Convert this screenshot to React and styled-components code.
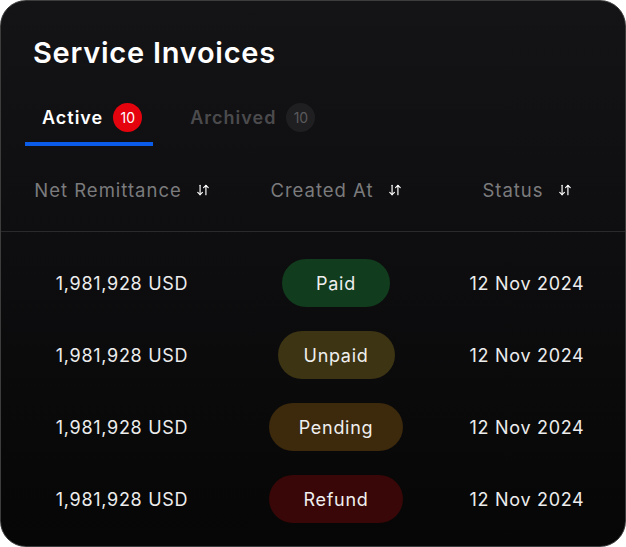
import React from "react"
import styled, { createGlobalStyle } from "styled-components"
import { ArrowDownUp } from "lucide-react"

const GlobalStyle = createGlobalStyle`
  body {
    margin: 0;
    background: #ffffff;
    font-family: Inter, "Noto Sans", sans-serif;
  }
`

const Card = styled.section`
  box-sizing: border-box;
  width: 626px;
  height: 547px;
  border: 1px solid #3d3d3d;
  border-radius: 26px;
  background: linear-gradient(180deg, #141316 0%, #0e0e10 45%, #060606 100%);
  overflow: hidden;
  color: #ececec;
`

const Title = styled.h1`
  margin: 0;
  padding: 34px 0 0 32px;
  font-size: 29px;
  line-height: 36px;
  font-weight: 600;
  color: #ffffff;
  letter-spacing: 0.75px;
`

const Tabs = styled.nav`
  display: flex;
  gap: 20px;
  padding: 31px 0 0 24px;
`

const Tab = styled.div`
  display: flex;
  align-items: center;
  gap: 10px;
  height: 30px;
  padding: 0 11px 10px 17px;
  border-bottom: 4px solid ${p => (p.active ? "#0b5ce8" : "transparent")};
  font-size: 18px;
  font-weight: 600;
  letter-spacing: 1px;
  color: ${p => (p.active ? "#ffffff" : "#4b4b4d")};
`

const Badge = styled.span`
  display: flex;
  align-items: center;
  justify-content: center;
  width: 29px;
  height: 29px;
  border-radius: 50%;
  font-size: 14px;
  font-weight: 400;
  letter-spacing: 0;
  background: ${p => (p.active ? "#e5040d" : "#1f1f21")};
  color: ${p => (p.active ? "#ffffff" : "#5a5a5c")};
`

const Grid = styled.div`
  display: grid;
  grid-template-columns: 242px 186px 1fr;
  align-items: center;
  text-align: center;
`

const HeadRow = styled(Grid)`
  padding: 30px 0 27px;
  border-bottom: 1px solid #2a2a2c;
`

const HeadCell = styled.div`
  display: flex;
  align-items: center;
  justify-content: center;
  gap: 14px;
  height: 28px;
  font-size: 18.5px;
  letter-spacing: 1px;
  color: #7b7b7d;

  svg {
    color: #ffffff;
  }
`

const Body = styled.div`
  padding-top: 15px;
`

const Row = styled(Grid)`
  height: 72px;
  font-size: 18px;
  letter-spacing: 0.7px;
  color: #ededed;
`

const pills = {
  Paid: { bg: "#113c1d", w: 108 },
  Unpaid: { bg: "#3d3413", w: 117 },
  Pending: { bg: "#3d290c", w: 134 },
  Refund: { bg: "#390707", w: 134 },
}

const Pill = styled.span`
  justify-self: center;
  display: flex;
  align-items: center;
  justify-content: center;
  width: ${p => pills[p.status].w}px;
  height: 48px;
  border-radius: 24px;
  background: ${p => pills[p.status].bg};
  color: #efefef;
`

const rows = ["Paid", "Unpaid", "Pending", "Refund"]

const App = () => (
  <Card>
    <GlobalStyle />
    <Title>Service Invoices</Title>
    <Tabs>
      <Tab active>
        Active <Badge active>10</Badge>
      </Tab>
      <Tab>
        Archived <Badge>10</Badge>
      </Tab>
    </Tabs>
    <HeadRow>
      <HeadCell>Net Remittance <ArrowDownUp size={14} strokeWidth={2} /></HeadCell>
      <HeadCell>Created At <ArrowDownUp size={14} strokeWidth={2} /></HeadCell>
      <HeadCell>Status <ArrowDownUp size={14} strokeWidth={2} /></HeadCell>
    </HeadRow>
    <Body>
      {rows.map(status => (
        <Row key={status}>
          <div>1,981,928 USD</div>
          <Pill status={status}>{status}</Pill>
          <div>12 Nov 2024</div>
        </Row>
      ))}
    </Body>
  </Card>
)

export default App
